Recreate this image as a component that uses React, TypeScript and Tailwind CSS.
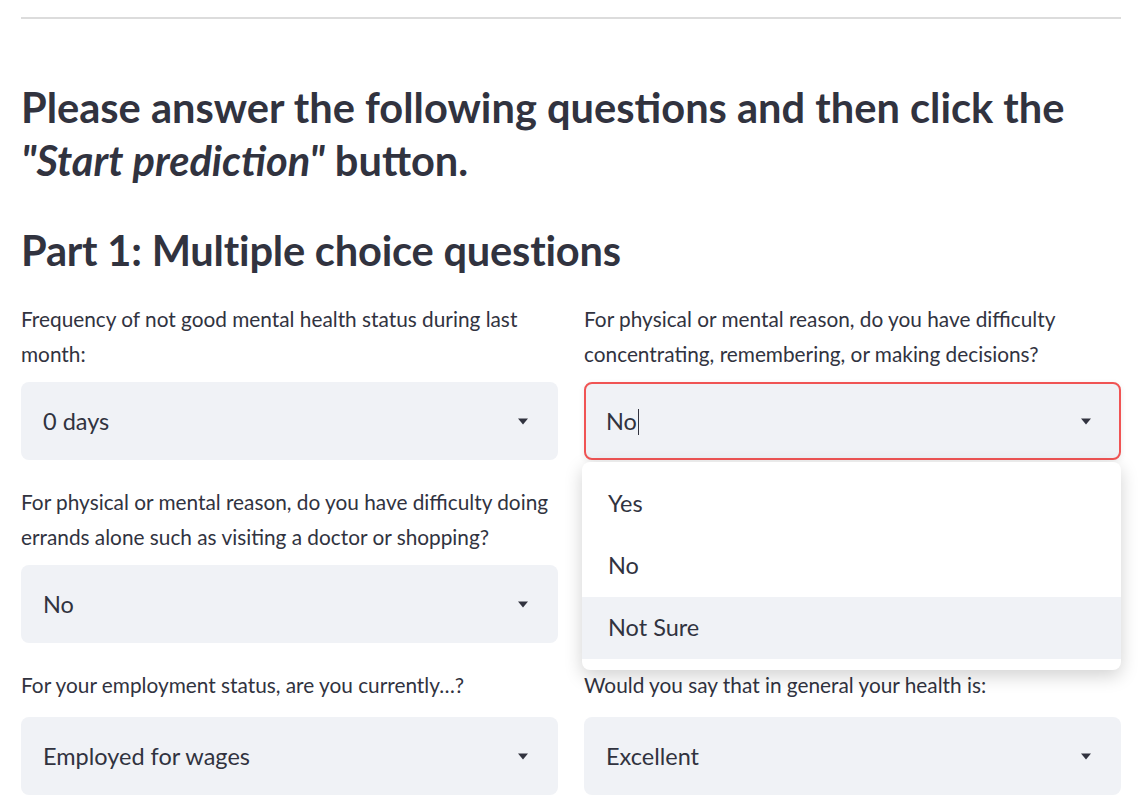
import { useState } from "react";

const Arrow = () => (
    <svg width="12" height="7" viewBox="0 0 12 7" className="shrink-0">
        <path d="M1 0.5 L11 0.5 L6 6.5 Z" fill="#31333F" />
    </svg>
);

const Label = ({ children, single }: { children: React.ReactNode; single?: boolean }) => (
    <p className={single ? "mb-[15px] text-[20.8px] leading-[35px] text-[#31333F]" : "mb-[11px] text-[20.8px] leading-[35px] text-[#31333F]"}>
        {children}
    </p>
);

const SelectBox = ({ value, focused }: { value: string; focused?: boolean }) => (
    <div
        className={
            focused
                ? "flex h-[78px] items-center justify-between rounded-lg border-2 border-[#f05454] bg-[#f0f2f6] pl-[20px] pr-[27px] shadow-[0_2px_6px_rgba(0,0,0,0.08)]"
                : "flex h-[78px] items-center justify-between rounded-lg bg-[#f0f2f6] pl-[22px] pr-[29px]"
        }
    >
        <span className="flex items-center pt-[2px] text-[23.5px] text-[#31333F]">
            {value}
            {focused && <span className="ml-[1px] inline-block h-[26px] w-px bg-[#31333F]" />}
        </span>
        <Arrow />
    </div>
);

const options = ["Yes", "No", "Not Sure"];

export default function App() {
    const [hover] = useState(2);
    return (
        <div className="min-h-screen bg-white font-['Lato',sans-serif] text-[#31333F]">
            <div className="px-[21px] pt-[17px]">
                <hr className="border-0 border-t-2 border-[#dcdcdc]" />

                <h2 className="mt-[62px] text-[41.6px] font-bold leading-[53px]">
                    Please answer the following questions and then click the
                    <br />
                    <em>"Start prediction"</em> button.
                </h2>

                <h2 className="mt-[37px] text-[41.6px] font-bold leading-[53px] tracking-[-0.2px]">
                    Part 1: Multiple choice questions
                </h2>

                <div className="mt-[24px] grid grid-cols-2 gap-x-[26px] gap-y-[24px]">
                    <div>
                        <Label>Frequency of not good mental health status during last month:</Label>
                        <SelectBox value="0 days" />
                    </div>
                    <div className="relative">
                        <Label>
                            For physical or mental reason, do you have difficulty concentrating, remembering, or
                            making decisions?
                        </Label>
                        <SelectBox value="No" focused />
                        <div className="absolute left-[-2px] right-0 top-[161px] z-10 rounded-lg bg-white py-[11px] shadow-[0_6px_18px_rgba(0,0,0,0.18)]">
                            {options.map((o, i) => (
                                <div
                                    key={o}
                                    className={
                                        i === hover
                                            ? "flex h-[62px] items-center bg-[#f0f2f6] pl-[26px] text-[23.5px] text-[#31333F]"
                                            : "flex h-[62px] items-center pl-[26px] text-[23.5px] text-[#31333F]"
                                    }
                                >
                                    {o}
                                </div>
                            ))}
                        </div>
                    </div>

                    <div>
                        <Label>
                            For physical or mental reason, do you have difficulty doing errands alone such as
                            visiting a doctor or shopping?
                        </Label>
                        <SelectBox value="No" />
                    </div>
                    <div />

                    <div>
                        <Label single>For your employment status, are you currently…?</Label>
                        <SelectBox value="Employed for wages" />
                    </div>
                    <div>
                        <Label single>Would you say that in general your health is:</Label>
                        <SelectBox value="Excellent" />
                    </div>
                </div>
            </div>
        </div>
    );
}
